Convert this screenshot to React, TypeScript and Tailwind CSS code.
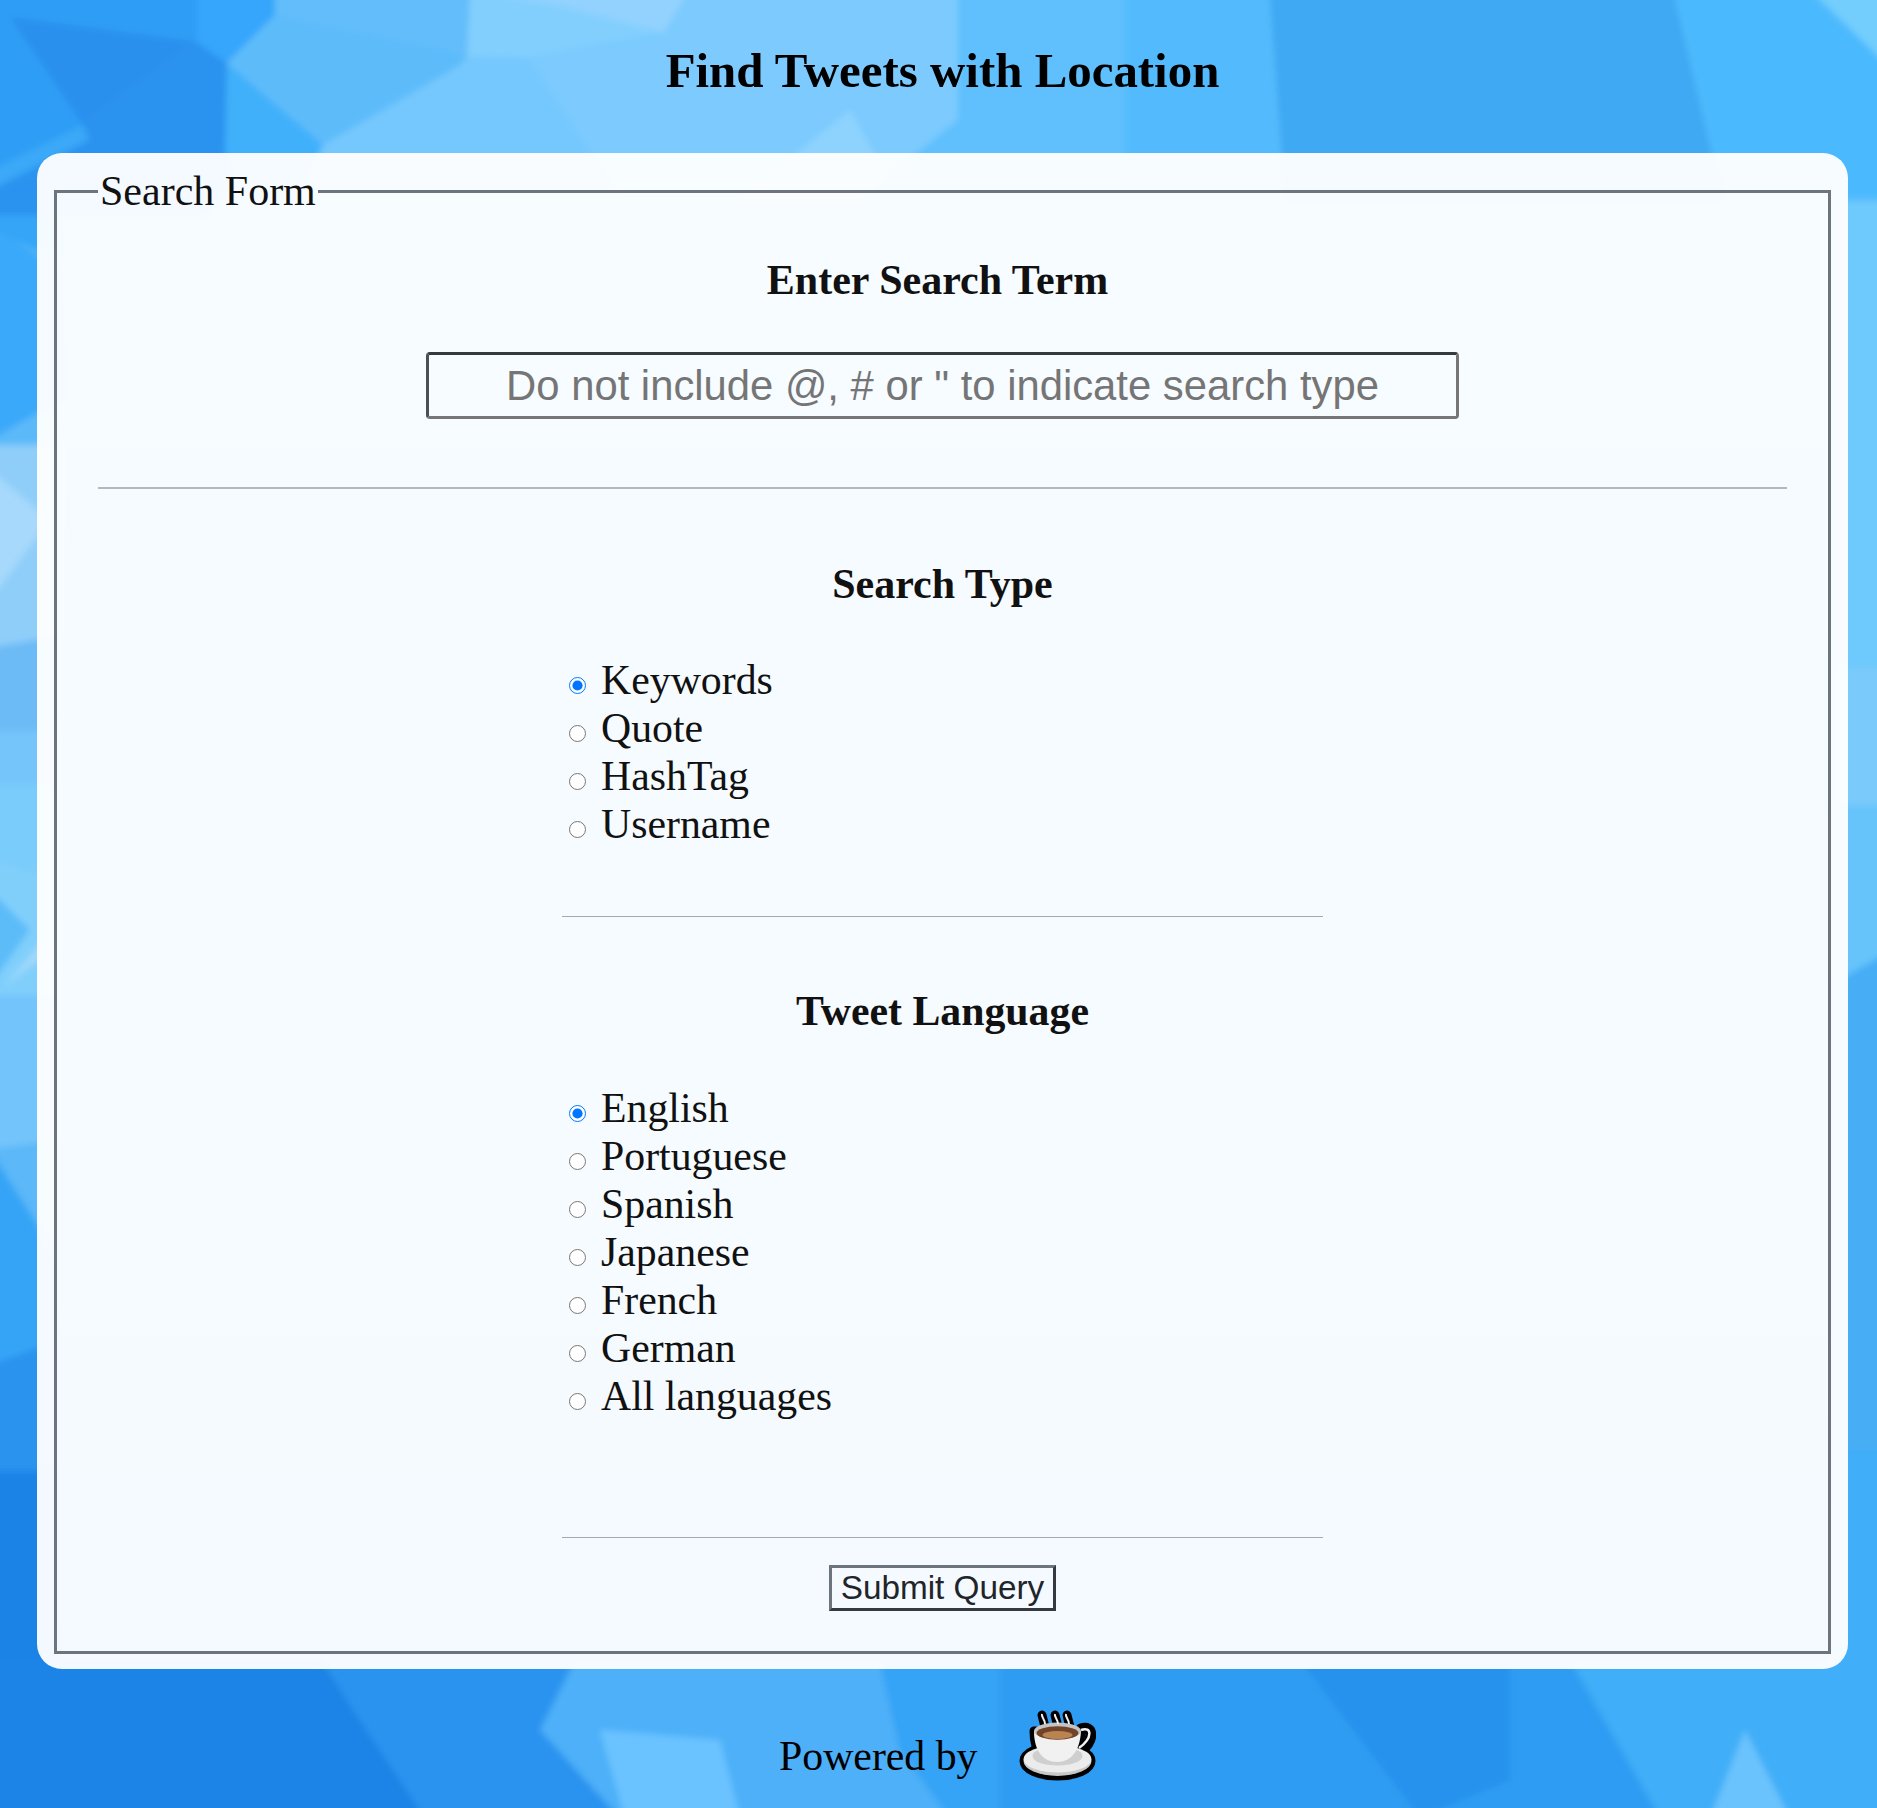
const SERIF = "font-['Liberation_Serif','Times_New_Roman',serif]"

const SEARCH_TYPES = ['Keywords', 'Quote', 'HashTag', 'Username']
const LANGUAGES = ['English', 'Portuguese', 'Spanish', 'Japanese', 'French', 'German', 'All languages']

// low-poly wallpaper: [fill, points]
const POLYS: [string, string][] = [
  // left strip
  ['#36a5f7', '-10,140 60,140 60,260 -10,230'],
  ['#3aa9f9', '-10,225 60,270 60,420 -10,445'],
  ['#5bb9f9', '-10,440 60,400 60,450 -10,450'],
  ['#8fcef9', '-10,445 60,445 60,636 -10,648'],
  ['#a6d9fb', '-10,470 50,520 -10,600'],
  ['#6cbbf6', '-10,648 60,636 60,731 -10,731'],
  ['#74c5fb', '-10,731 60,731 60,784 -10,784'],
  ['#7accfb', '-10,784 60,784 60,880 -10,858'],
  ['#80cffb', '-10,858 60,880 60,995 -10,995'],
  ['#5cbcf8', '-10,890 30,930 -10,985'],
  ['#a0d9fb', '5,985 60,920 60,945'],
  ['#73c4fb', '-10,995 60,995 60,1140 -10,1150'],
  ['#36a4f6', '-10,1150 60,1260 60,1365 -10,1365'],
  ['#5cb8f8', '-10,1150 60,1140 60,1260'],
  ['#2a93ee', '-10,1365 60,1340 60,1471 -10,1471'],
  ['#1f83e6', '-10,1471 60,1471 60,1818 -10,1818'],
  // right strip
  ['#6ec9fc', '1830,150 1887,150 1887,668 1830,668'],
  ['#7acbfb', '1830,668 1887,668 1887,805 1830,805'],
  ['#66c4fb', '1830,805 1887,805 1887,953 1830,985'],
  ['#47aef5', '1830,985 1887,953 1887,1450 1830,1450'],
  ['#40aef8', '1830,1450 1887,1450 1887,1818 1830,1818'],
  // top band
  ['#2f9df5', '-10,-10 200,-10 197,42 83,125 -10,170'],
  ['#2a90ee', '10,17 197,42 83,125'],
  ['#2b93ef', '197,42 83,125 -10,170 -10,215 205,215 250,153 227,63'],
  ['#3aa8f8', '-10,170 83,125 89,140 -10,190'],
  ['#34a6fb', '197,-10 275,-10 275,15 227,63 197,42'],
  ['#3fb0fb', '227,63 323,145 300,200 250,200 225,153'],
  ['#5dbbfa', '227,63 275,15 431,47 455,68 323,145'],
  ['#63bdfa', '275,-10 470,-10 467,57 431,47 275,15'],
  ['#75c8fd', '323,145 455,68 467,57 527,58 620,200 300,200'],
  ['#82cffe', '467,57 470,-10 563,7 664,33 527,58'],
  ['#93d2fe', '470,-10 690,-10 664,33 563,7'],
  ['#7ccafe', '664,33 690,-10 958,-10 958,120 860,200 620,200 527,58'],
  ['#8ed3fe', '740,200 850,110 900,200'],
  ['#5fc0fd', '958,120 958,-10 1125,-10 1125,200 860,200'],
  ['#53bbfd', '1125,-10 1269,-10 1285,200 1125,200'],
  ['#3fa9f3', '1269,-10 1673,-10 1723,200 1285,200'],
  ['#4cb9fd', '1673,-10 1810,-10 1887,60 1887,200 1723,200'],
  ['#73cefd', '1810,-10 1887,-10 1887,65'],
  // bottom band
  ['#1e84e6', '-10,1660 320,1660 425,1818 -10,1818'],
  ['#1f80de', '311,1660 467,1660 425,1781'],
  ['#2a93ef', '320,1660 575,1660 540,1730 620,1818 425,1818'],
  ['#4db0f8', '575,1660 880,1660 900,1750 950,1818 620,1818 540,1730'],
  ['#6ac3ff', '600,1730 720,1740 740,1818 625,1818'],
  ['#36a3f6', '880,1660 1000,1660 1000,1818 950,1818 900,1750'],
  ['#2f9cf2', '1000,1660 1570,1660 1660,1818 1000,1818'],
  ['#2892ee', '1300,1660 1510,1660 1510,1780 1420,1818'],
  ['#40aef8', '1570,1660 1887,1660 1887,1818 1660,1818'],
  ['#6ac3fc', '1745,1730 1790,1818 1710,1818'],
]

function CoffeeCup() {
  return (
    <svg viewBox="0 0 77 72" className="h-[72px] w-[77px]">
      <g fill="#000" stroke="#000" strokeWidth="9" strokeLinejoin="round" strokeLinecap="round">
        <ellipse cx="38.5" cy="52" rx="33.5" ry="15" />
        <path d="M15 22 C15 42 24 53 38 53 C52 53 61 42 62 22 Z" />
        <path d="M62 20 C74 16 76 30 62 42" fill="none" strokeWidth="11" />
        <path d="M23 6 L26 18 M36 6 L39 18 M48 6 L51 18" fill="none" strokeWidth="9" />
      </g>
      <ellipse cx="38.5" cy="52" rx="34" ry="15" fill="#c8c8c8" />
      <ellipse cx="38.5" cy="50" rx="34" ry="13.5" fill="#ececec" />
      <ellipse cx="38.5" cy="47" rx="25" ry="9.5" fill="#cfcfcf" />
      <path d="M62 21 C73 17 74 29 60 39" fill="none" stroke="#f2f2f2" strokeWidth="2.5" />
      <path d="M15 22 C15 42 24 53 38 53 C52 53 61 42 62 22 Z" fill="#f1f1f1" />
      <ellipse cx="38.5" cy="22" rx="23.5" ry="8.5" fill="#c4c4c4" />
      <ellipse cx="38.5" cy="24" rx="21" ry="6.8" fill="#71442a" />
      <ellipse cx="38.5" cy="26" rx="15" ry="4" fill="#b98352" />
      <path d="M23 5 C22 8 26 10 26 15 M36 5 C35 8 39 10 39 15 M47 5 C46 8 50 10 50 15" fill="none" stroke="#f2f2f2" strokeWidth="2" />
    </svg>
  )
}

function RadioGroup({ name, items }: { name: string; items: string[] }) {
  return (
    <div className="flex flex-col">
      {items.map((label, i) => (
        <label key={label} className="flex items-center text-[41.8px] leading-[48px] text-[#111]">
          <input
            type="radio"
            name={name}
            defaultChecked={i === 0}
            className="ml-[7px] mr-[15px] mt-[10px] h-[17px] w-[17px] shrink-0"
          />
          {label}
        </label>
      ))}
    </div>
  )
}

export default function App() {
  return (
    <div className={`relative isolate h-[1808px] overflow-hidden ${SERIF}`}>
      <svg viewBox="0 0 1877 1808" className="absolute inset-0 -z-10 h-full w-full">
        <defs>
          <linearGradient id="wall" x1="0" y1="0" x2="0" y2="1">
            <stop offset="0" stopColor="#5cbcfb" />
            <stop offset="0.6" stopColor="#45aef7" />
            <stop offset="1" stopColor="#2a93ee" />
          </linearGradient>
          <filter id="soft" x="-1%" y="-1%" width="102%" height="102%">
            <feGaussianBlur stdDeviation="3" />
          </filter>
        </defs>
        <rect width="1877" height="1808" fill="url(#wall)" />
        <g filter="url(#soft)">
          {POLYS.map(([fill, points]) => (
            <polygon key={points} fill={fill} points={points} />
          ))}
        </g>
      </svg>

      <h1 className="h-[153px] pl-[8px] pt-[42px] text-center text-[48.9px] font-bold leading-[57px] text-black">
        Find Tweets with Location
      </h1>

      <main className="ml-[37px] w-[1811px] rounded-[25px] bg-white/95 px-[17px] pb-[15px] pt-[14px]">
        <fieldset className="h-[1487px] border-[3px] border-[#6c757d] px-[41px]">
          <legend className="px-[2px] text-[42px] leading-[48px] text-[#111]">Search Form</legend>

          <h2 className="mt-[41px] pr-[10px] text-center text-[42px] font-bold leading-[48px] text-[#111]">
            Enter Search Term
          </h2>
          <div className="mt-[48px] flex justify-center">
            <input
              type="text"
              placeholder={'Do not include @, # or " to indicate search type'}
              className="h-[67px] w-[1033px] rounded-[4px] border-[3px] border-[#767676] border-t-[#343a40] border-l-[#4a5055] text-center font-['Liberation_Sans',Arial,sans-serif] text-[41.8px] placeholder:text-[#757575]"
            />
          </div>
          <hr className="mt-[68px] border-t-2 border-[#b4b8bc]" />

          <div className="mx-auto w-[761px]">
            <h2 className="mt-[71px] text-center text-[42px] font-bold leading-[48px] text-[#111]">
              Search Type
            </h2>
            <div className="mt-[48px]">
              <RadioGroup name="searchType" items={SEARCH_TYPES} />
            </div>
            <hr className="mt-[68px] border-t border-[#a5a9ad]" />

            <h2 className="mt-[70px] text-center text-[41.8px] font-bold leading-[48px] text-[#111]">
              Tweet Language
            </h2>
            <div className="mt-[49px]">
              <RadioGroup name="language" items={LANGUAGES} />
            </div>
            <hr className="mt-[117px] border-t border-[#a5a9ad]" />

            <div className="mt-[27px] flex justify-center">
              <button
                type="button"
                className="h-[46px] w-[227px] border-[3px] border-[#343a40] border-l-[#6c757d] border-t-[#6c757d] font-['Liberation_Sans',Arial,sans-serif] text-[33.3px] leading-none text-[#212529]"
              >
                Submit Query
              </button>
            </div>
          </div>
        </fieldset>
      </main>

      <footer className="mt-[40px] flex items-start">
        <p className="ml-[779px] mt-[23px] text-[41.8px] leading-[48px] text-black">Powered by</p>
        <div className="ml-[41px]">
          <CoffeeCup />
        </div>
      </footer>
    </div>
  )
}
